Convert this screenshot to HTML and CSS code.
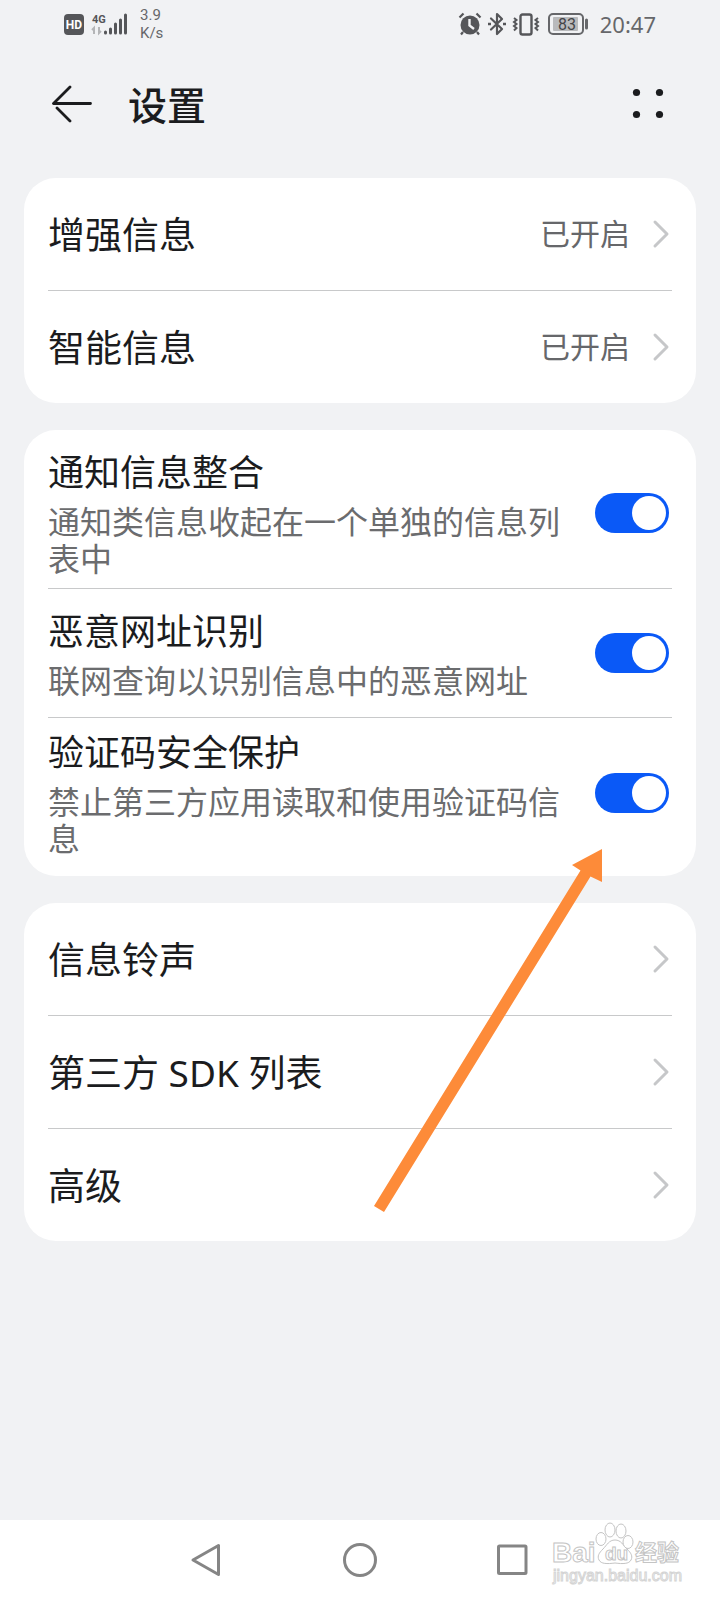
FILE: index.html
```html
<!DOCTYPE html>
<html lang="zh-CN">
<head>
<meta charset="utf-8">
<meta name="viewport" content="width=device-width, initial-scale=1">
<title>设置</title>
<link rel="stylesheet" href="styles.css">
</head>
<body>
<div class="screen">
  <div class="status">
    <div class="status-left">
      <svg class="icon" width="64" height="24" viewBox="0 0 64 24" aria-hidden="true">
        <rect x="0" y="2" width="20" height="21" rx="4" fill="#555659"/>
        <text x="10" y="17" class="hd">HD</text>
        <text x="28" y="11" class="net">4G</text>
        <path d="M30 22v-6l-2 2M35 15v6l2-2" fill="none" stroke="#b4b5b7" stroke-width="2"/>
        <path d="M41.500 20v1M46.500 17v4M51.500 12v9M56.500 8v13M61.500 3v18" fill="none" stroke="#555659" stroke-width="3" stroke-linecap="round"/>
      </svg>
      <div class="speed"><span>3.9</span><span>K/s</span></div>
    </div>
    <div class="status-right">
      <svg class="icon" width="24" height="24" viewBox="0 0 24 24" aria-hidden="true">
        <circle cx="12" cy="13" r="9.500" fill="#555659"/>
        <path d="M1.500 5.500l4-4M18.500 1.500l4 4M5 20l-2 2.500M19 20l2 2.500" stroke="#555659" stroke-width="2.200" fill="none"/>
        <path d="M11.500 7v6.500l4.500 3.500" stroke="#f1f2f4" stroke-width="2.400" fill="none"/>
      </svg>
      <svg class="icon" width="18" height="24" viewBox="0 0 18 24" aria-hidden="true">
        <path d="M3 6.500l11 10.500-5 5V2l5 5L3 17.500" fill="none" stroke="#555659" stroke-width="2.200" stroke-linejoin="round" stroke-linecap="round"/>
        <path d="M0 12h3M15 12h3" stroke="#555659" stroke-width="2.600"/>
      </svg>
      <svg class="icon" width="28" height="24" viewBox="0 0 28 24" aria-hidden="true">
        <rect x="8.500" y="2.500" width="11" height="20" rx="2" fill="none" stroke="#555659" stroke-width="2.400"/>
        <path d="M2 6l2.500 2L2 10l2.500 2L2 14l2.500 2L2 18.500M26 6l-2.500 2 2.500 2-2.500 2 2.500 2-2.500 2 2.500 2.500" fill="none" stroke="#555659" stroke-width="2"/>
      </svg>
      <svg class="icon" width="42" height="24" viewBox="0 0 42 24" aria-hidden="true">
        <rect x="3" y="2" width="34" height="20" rx="4" fill="none" stroke="#66676a" stroke-width="2"/>
        <rect x="7" y="5" width="25" height="14" rx="1" fill="#b9babc"/>
        <path d="M40.500 8v8" stroke="#66676a" stroke-width="3" stroke-linecap="round"/>
        <text x="21" y="18" class="pct">83</text>
      </svg>
      <time class="clock">20:47</time>
    </div>
  </div>

  <header class="header">
    <button class="icon-btn" type="button" aria-label="返回">
      <svg width="40" height="40" viewBox="0 0 40 40" aria-hidden="true"><path d="M18 2L1.500 18.500h37M5 23l13 13" fill="none" stroke="#1b1c1e" stroke-width="2.800" stroke-linecap="round" stroke-linejoin="round"/></svg>
    </button>
    <h1 class="title">设置</h1>
    <button class="icon-btn" type="button" aria-label="更多">
      <svg width="40" height="40" viewBox="0 0 40 40" aria-hidden="true" fill="#1b1c1e"><circle cx="8.500" cy="7.500" r="3.600"/><circle cx="31.500" cy="7.500" r="3.600"/><circle cx="8.500" cy="29.500" r="3.600"/><circle cx="31.500" cy="29.500" r="3.600"/></svg>
    </button>
  </header>

  <main class="cards">
    <section class="card">
      <a class="row" href="#rcs"><span class="name name-link">增强信息</span><span class="value">已开启</span><svg class="chevron" width="20" height="30" viewBox="0 0 20 30" aria-hidden="true"><path d="M3 3l12 12L3 27"/></svg></a>
      <a class="row" href="#smart"><span class="name name-link">智能信息</span><span class="value">已开启</span><svg class="chevron" width="20" height="30" viewBox="0 0 20 30" aria-hidden="true"><path d="M3 3l12 12L3 27"/></svg></a>
    </section>

    <section class="card card-switches">
      <label class="row row-tall"><span class="text"><span class="name">通知信息整合</span><span class="desc">通知类信息收起在一个单独的信息列表中</span></span><input class="switch" type="checkbox" role="switch" checked></label>
      <label class="row"><span class="text"><span class="name">恶意网址识别</span><span class="desc">联网查询以识别信息中的恶意网址</span></span><input class="switch" type="checkbox" role="switch" checked></label>
      <label class="row row-tall"><span class="text"><span class="name">验证码安全保护</span><span class="desc">禁止第三方应用读取和使用验证码信息</span></span><input class="switch" type="checkbox" role="switch" checked></label>
    </section>

    <section class="card">
      <a class="row" href="#ringtone"><span class="name name-link">信息铃声</span><svg class="chevron" width="20" height="30" viewBox="0 0 20 30" aria-hidden="true"><path d="M3 3l12 12L3 27"/></svg></a>
      <a class="row" href="#sdk"><span class="name name-link">第三方 SDK 列表</span><svg class="chevron" width="20" height="30" viewBox="0 0 20 30" aria-hidden="true"><path d="M3 3l12 12L3 27"/></svg></a>
      <a class="row" href="#advanced"><span class="name name-link">高级</span><svg class="chevron" width="20" height="30" viewBox="0 0 20 30" aria-hidden="true"><path d="M3 3l12 12L3 27"/></svg></a>
      <svg class="pointer" width="230" height="366" viewBox="0 0 230 366" aria-hidden="true"><path d="M229 1L199 17l8.500 5.500L1 358l10 6L217.500 28.500l11.500 5.500z" fill="#fd8b39"/></svg>
    </section>
  </main>

  <nav class="navbar">
    <button class="nav-btn" type="button" aria-label="后退"><svg width="34" height="34" viewBox="0 0 34 34" aria-hidden="true"><path d="M29.500 2.500v29L4 17z"/></svg></button>
    <button class="nav-btn" type="button" aria-label="主屏幕"><svg width="34" height="34" viewBox="0 0 34 34" aria-hidden="true"><circle cx="17" cy="17" r="15.500"/></svg></button>
    <button class="nav-btn" type="button" aria-label="最近任务"><svg width="34" height="34" viewBox="0 0 34 34" aria-hidden="true"><rect x="1.500" y="3" width="27.500" height="27.500" rx="1"/></svg></button>
    <svg class="watermark" width="132" height="66" viewBox="0 0 132 66" role="img" aria-label="Baidu 经验">
      <text x="1" y="41" class="wm-brand">Bai</text>
      <path d="M64 19c-6 0-8 5-12 9s-6 7-4 11 8 4 16 3c8 1 14 1 16-3s0-7-4-11-6-9-12-9z"/>
      <ellipse cx="50" cy="18" rx="5" ry="6.500"/><ellipse cx="59" cy="9" rx="5" ry="7"/><ellipse cx="70" cy="10" rx="5" ry="7"/><ellipse cx="77" cy="21" rx="5" ry="6.500"/>
      <text x="54" y="39" class="wm-du">du</text>
      <text x="84" y="39" class="wm-cn">经验</text>
      <text x="2" y="60" class="wm-url">jingyan.baidu.com</text>
    </svg>
  </nav>
</div>
</body>
</html>
```
FILE: styles.css
```css
* { box-sizing: border-box; }

body {
  margin: 0;
  background: #f1f2f4;
  color: #1b1c1e;
  font-family: "Noto Sans", "Noto Sans CJK SC", sans-serif;
}

button {
  padding: 0;
  border: 0;
  background: none;
  display: flex;
}

.screen {
  min-height: 100vh;
  display: flex;
  flex-direction: column;
}

.status {
  display: flex;
  justify-content: space-between;
  align-items: center;
  height: 48px;
  padding: 0 64px;
  color: #66676a;
}

.status-left, .status-right { display: flex; align-items: center; }
.status-left { gap: 12px; }
.status-right { gap: 6px; }
.icon { flex: none; }

.speed {
  display: flex;
  flex-direction: column;
  font: 15px/18px Roboto, sans-serif;
}

.clock { margin-left: 6px; font-size: 22px; line-height: 24px; }
.hd { font: 700 12px Roboto, sans-serif; fill: #fff; text-anchor: middle; }
.net { font: 700 11px Roboto, sans-serif; fill: #555659; }
.pct { font: 16px Roboto, sans-serif; fill: #444548; text-anchor: middle; }

.header {
  display: flex;
  align-items: center;
  height: 114px;
  padding: 0 52px;
}

.title {
  flex: 1;
  margin: 0 0 0 36px;
  font-size: 39px;
  line-height: 56px;
  font-weight: 500;
}

.cards {
  flex: 1;
  display: flex;
  flex-direction: column;
  gap: 27px;
  padding: 16px 24px 24px;
}

.card {
  position: relative;
  padding: 0 24px;
  border-radius: 32px;
  background: #fff;
}

.card-switches { padding: 8px 24px; }

.row {
  display: flex;
  align-items: center;
  min-height: 112px;
  color: inherit;
  text-decoration: none;
}

.row + .row { border-top: 1px solid #c8c9ca; min-height: 113px; }
.card-switches .row { min-height: 129px; }
.card-switches .row-tall { min-height: 150px; }
.card-switches .row + .row-tall { min-height: 151px; }

.name {
  flex: 1;
  font-size: 36px;
  line-height: 48px;
  font-weight: 400;
}

.name-link { padding-top: 2px; font-size: 37px; }

.value {
  margin-right: 22px;
  color: #66676a;
  font-size: 30px;
  line-height: 40px;
}

.chevron {
  flex: none;
  fill: none;
  stroke: #c6c7c9;
  stroke-width: 3;
  stroke-linecap: round;
  stroke-linejoin: round;
}

.text {
  flex: 1;
  display: flex;
  flex-direction: column;
  gap: 6px;
  padding-right: 32px;
}

.desc {
  color: #6b6c6e;
  font-size: 32px;
  line-height: 37px;
}

.switch {
  appearance: none;
  flex: none;
  display: flex;
  width: 74px;
  height: 40px;
  margin: 0 3px 0 0;
  padding: 3px;
  border-radius: 20px;
  background: #c6c7c9;
}

.switch::before {
  content: "";
  width: 34px;
  height: 34px;
  border-radius: 50%;
  background: #fff;
}

.switch:checked { justify-content: flex-end; background: #0a59f7; }

/* The annotation arrow starts in the last card and ends below its neighbour's switch. */
.pointer {
  position: absolute;
  top: -55px;
  right: 93px;
  pointer-events: none;
}

.navbar {
  position: relative;
  display: flex;
  justify-content: center;
  align-items: center;
  gap: 120px;
  height: 80px;
  background: #fff;
}

.nav-btn svg {
  fill: none;
  stroke: #858585;
  stroke-width: 3;
  stroke-linejoin: round;
}

.watermark {
  position: absolute;
  right: 37px;
  top: 1px;
  fill: #fff;
  stroke: #c4c4c4;
  stroke-width: 1;
}

.wm-brand { font: 700 28px "Liberation Sans", sans-serif; }
.wm-du { font: 700 19px "Liberation Sans", sans-serif; }
.wm-cn { font: 700 22px "Noto Sans CJK SC", sans-serif; }
.wm-url { font: 16px "Liberation Sans", sans-serif; stroke: #d4d4d4; }
```
